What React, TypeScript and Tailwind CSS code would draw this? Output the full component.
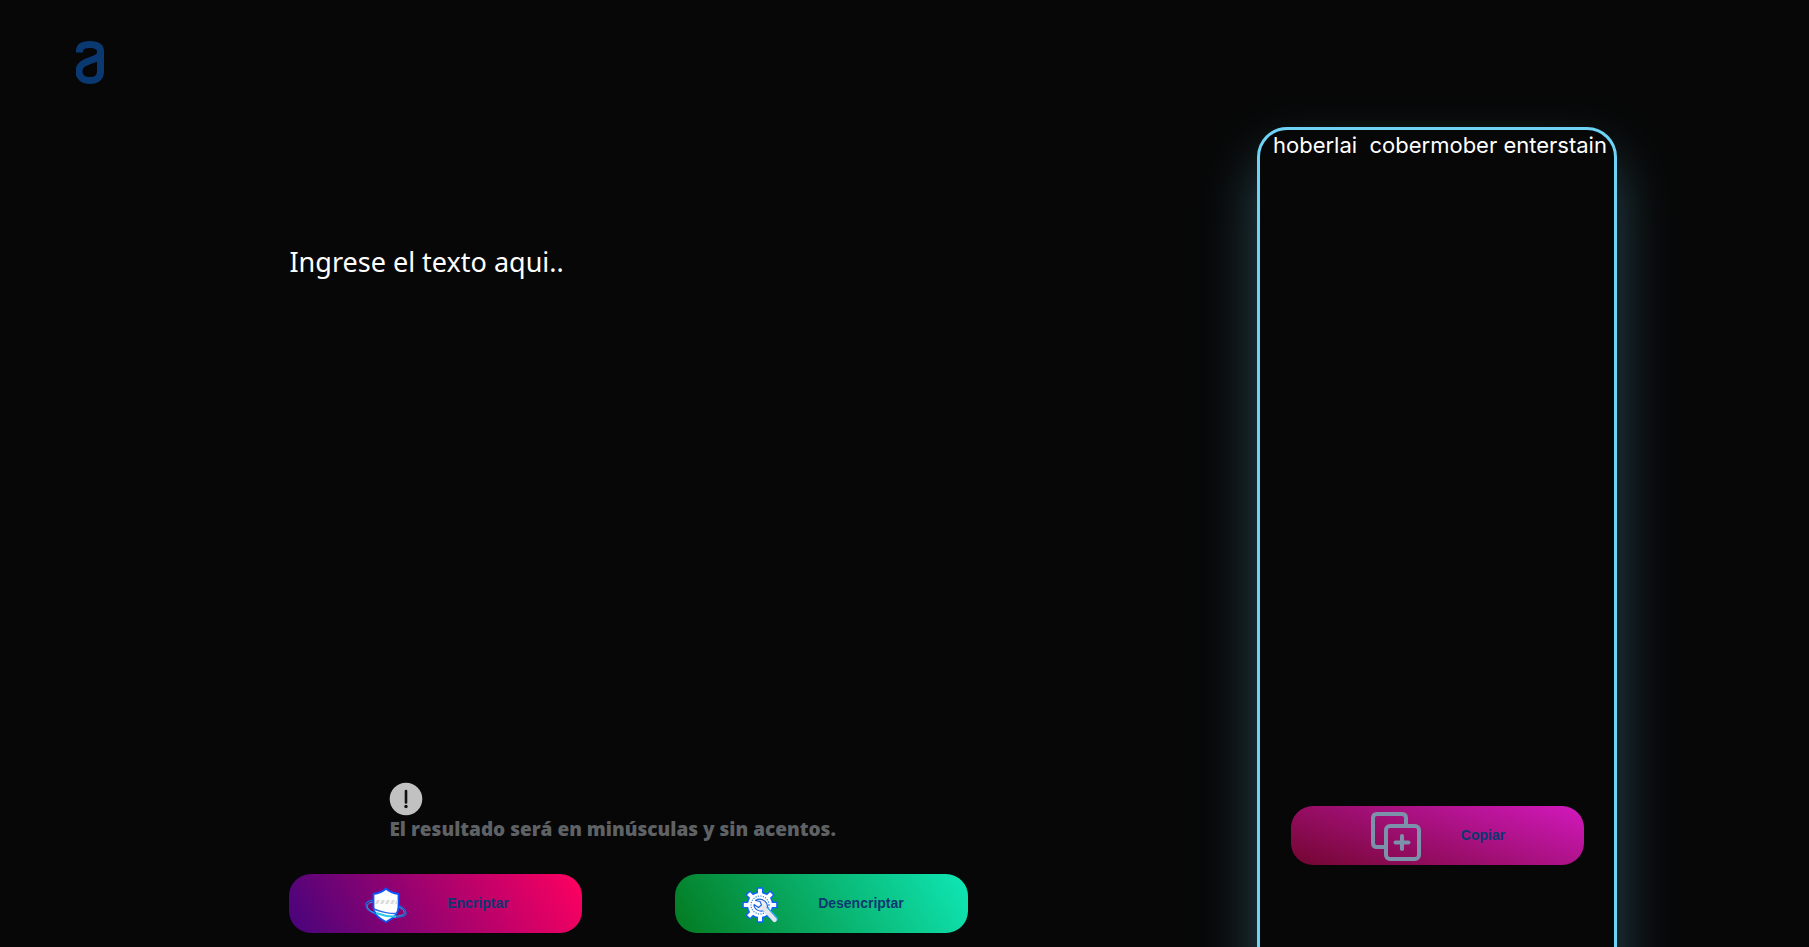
import type { ReactNode } from "react";

function LogoIcon() {
  return (
    <svg viewBox="0 0 28 44" className="h-11 w-7" fill="none" stroke="#0a3871" strokeWidth="7" aria-hidden="true">
      <path d="M3.500 12.500V11C3.500 6.500 7.500 4.500 14 4.500S24.500 6.500 24.500 11.500V31.500C24.500 37.500 20.500 40.500 14 40.500S3 37.500 3 31.500C3 25.500 6.500 23.500 11 21.800L19 18.800C22.500 17.400 24.500 15.500 24.500 12.500" />
    </svg>
  );
}

function AlertIcon() {
  return (
    <svg viewBox="0 0 34 34" className="h-[34px] w-[34px]" aria-hidden="true">
      <circle cx="17" cy="17" r="16.300" fill="#c1c1c1" />
      <path d="M17 9V20.500" stroke="#111" strokeWidth="2.600" strokeLinecap="round" />
      <circle cx="17" cy="24.500" r="1.700" fill="#111" />
    </svg>
  );
}

function ShieldIcon() {
  return (
    <svg viewBox="0 0 42 36" className="h-9 w-[42px]" fill="none" aria-hidden="true">
      <path d="M9 13C3 13.500 0 16 1.200 19.500C3 25 14 29 24 30C34 31 41.500 29.500 41 25.500C40.600 22.500 37 20 33 18.500" stroke="#1b62d8" strokeWidth="1.500" />
      <path d="M9 15C4 15.500 1.500 17.500 2.500 20.500C4 25 14 28 24 29C33 29.800 39.500 28.500 39.300 25.500C39 23 36 21 33 20" stroke="#35a6d8" strokeWidth="1" />
      <path d="M21 1.500C17.500 5 13 6.500 8.500 7V20C8.500 27.500 14 31.500 21 35C28 31.500 33.500 27.500 33.500 20V7C29 6.500 24.500 5 21 1.500Z" fill="#fff" stroke="#0a55ff" strokeWidth="1.800" />
      <path d="M10 17L12 13H15L13 17ZM15 17L17 13H20L18 17ZM20 17L22 13H25L23 17ZM25 17L27 13H30L28 17ZM30 17L31.500 13H32.500V17Z" fill="#dcdcdc" />
      <path d="M9 22C14 24.500 25 27 32 26.500" stroke="#2f6fe8" strokeWidth="1.500" />
      <path d="M11 26C17 28.300 25 29.700 31 29.500" stroke="#2ecbe8" strokeWidth="2" />
    </svg>
  );
}

const teeth = [0, 45, 90, 135, 180, 225, 270, 315];

function GearIcon() {
  return (
    <svg viewBox="0 0 36 36" className="h-9 w-9" fill="none" aria-hidden="true">
      <g fill="#0a62ff">
        <circle cx="18" cy="18" r="13.500" />
        {teeth.map((a) => (
          <rect key={a} x="14.800" y="0.300" width="6.400" height="8" rx="1" transform={`rotate(${a} 18 18)`} />
        ))}
      </g>
      <g fill="#fff">
        <circle cx="18" cy="18" r="12" />
        {teeth.map((a) => (
          <rect key={a} x="16" y="1.800" width="4" height="7" rx="0.500" transform={`rotate(${a} 18 18)`} />
        ))}
      </g>
      <circle cx="18" cy="18" r="9" stroke="#2f7dea" strokeWidth="1.200" strokeDasharray="1.200 1.300" />
      <path d="M22.500 20.500L33 32" stroke="#28a9f0" strokeWidth="5.600" strokeLinecap="round" />
      <path d="M13.500 13.500C18 10.500 25 13 25.500 19.500L22.500 23.500C17.500 25.500 12 22.500 12 17.500L16.500 20.500L19.500 18L18 14.500Z" fill="#e9edf5" stroke="#1c62dc" strokeWidth="1.100" strokeLinejoin="round" />
      <path d="M22 21L32.500 32.800" stroke="#e6e6ea" strokeWidth="4.400" strokeLinecap="round" />
    </svg>
  );
}

function CopyIcon() {
  return (
    <svg viewBox="0 0 50 49" className="h-[49px] w-[50px]" fill="none" stroke="#7c92aa" strokeWidth="4" strokeLinecap="round" strokeLinejoin="round" aria-hidden="true">
      <path d="M13 35H6Q2 35 2 31V6Q2 2 6 2H31Q35 2 35 6V13" />
      <rect x="15" y="14" width="33" height="33" rx="4" />
      <path d="M31 24V37M24.500 30.500H37.500" />
    </svg>
  );
}

function ActionButton({ className, icon, children }: { className: string; icon: ReactNode; children: ReactNode }) {
  return (
    <button
      type="button"
      className={`flex h-[59px] w-[293px] shrink-0 items-center justify-center gap-10 rounded-[22px] pb-0.5 pl-0.5 font-['Liberation_Sans'] text-sm font-bold text-[#0a3871] ${className}`}
    >
      <span className="pt-1">{icon}</span>
      {children}
    </button>
  );
}

export default function App() {
  return (
    <div className="flex h-screen flex-col overflow-hidden bg-[#070707]">
      <header className="h-[127px] shrink-0 px-[76px] pt-10">
        <a href="#" aria-label="Inicio" className="inline-block">
          <LogoIcon />
        </a>
      </header>
      <main className="flex min-h-0 flex-1 justify-between pr-48 pl-[16%]">
        <section className="flex w-[679px] flex-col pt-[115px] pb-3.5">
          <textarea
            aria-label="Texto"
            placeholder="Ingrese el texto aqui.."
            className="min-h-0 w-full flex-1 resize-none bg-transparent font-['Noto_Sans',sans-serif] text-[27px] leading-10 text-white outline-none placeholder:text-white"
          />
          <div className="mb-8 pl-[100px]">
            <AlertIcon />
            <p className="font-['Open_Sans',sans-serif] text-[19px] leading-[26px] font-extrabold text-[#5f6265]">
              El resultado será en minúsculas y sin acentos.
            </p>
          </div>
          <div className="flex justify-between">
            <ActionButton className="bg-linear-[60deg,#46047c,#ff0060]" icon={<ShieldIcon />}>Encriptar</ActionButton>
            <ActionButton className="bg-linear-[60deg,#037a20,#0fe7b6]" icon={<GearIcon />}>Desencriptar</ActionButton>
          </div>
        </section>
        <aside className="flex h-[900px] w-[360px] shrink-0 flex-col items-center rounded-[30px] border-3 border-[#6fd3f5] shadow-[0_30px_60px_#6fd3f552]">
          <output className="w-full flex-1 pl-[13px] font-['Inter',sans-serif] text-[22px] leading-[30px] whitespace-pre text-white">
            hoberlai  cobermober enterstain
          </output>
          <ActionButton className="mb-[159px] bg-linear-[20deg,#720630,#d219bd]" icon={<CopyIcon />}>Copiar</ActionButton>
        </aside>
      </main>
    </div>
  );
}
